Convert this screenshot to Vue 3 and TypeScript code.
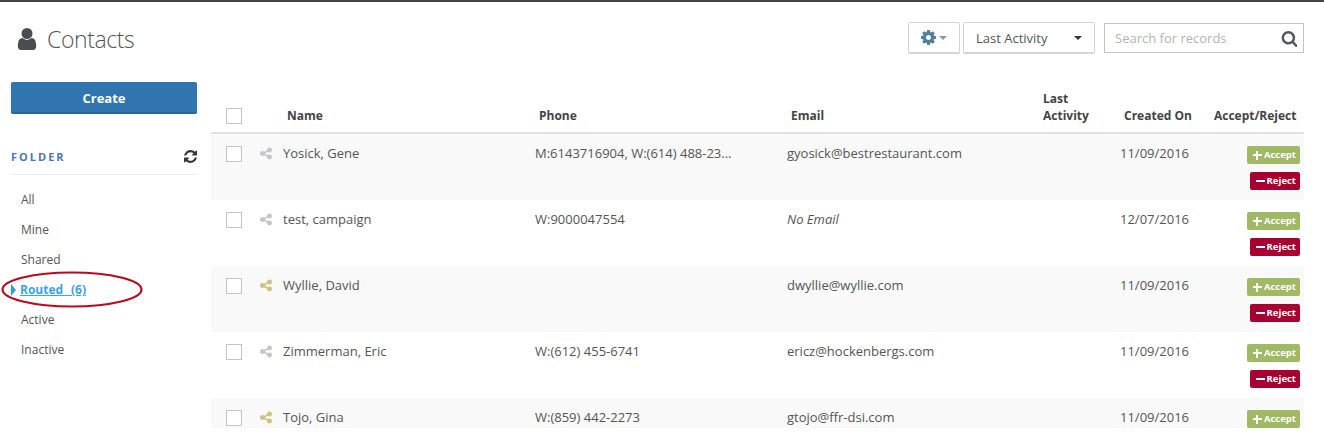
<script setup lang="ts">
interface Row { name: string; phone: string; email: string; created: string; routed: boolean; noEmail?: boolean }
const folders = ['All', 'Mine', 'Shared', 'Routed', 'Active', 'Inactive']
const rows: Row[] = [
  { name: 'Yosick, Gene', phone: 'M:6143716904, W:(614) 488-23...', email: 'gyosick@bestrestaurant.com', created: '11/09/2016', routed: false },
  { name: 'test, campaign', phone: 'W:9000047554', email: 'No Email', created: '12/07/2016', routed: false, noEmail: true },
  { name: 'Wyllie, David', phone: '', email: 'dwyllie@wyllie.com', created: '11/09/2016', routed: true },
  { name: 'Zimmerman, Eric', phone: 'W:(612) 455-6741', email: 'ericz@hockenbergs.com', created: '11/09/2016', routed: false },
  { name: 'Tojo, Gina', phone: 'W:(859) 442-2273', email: 'gtojo@ffr-dsi.com', created: '11/09/2016', routed: true },
]
const shareD = 'M1216 1024q133 0 226.5 93.5t93.5 226.5-93.5 226.5-226.5 93.5-226.5-93.5-93.5-226.5q0-12 2-34l-360-180q-92 86-218 86-133 0-226.5-93.5t-93.5-226.5 93.5-226.5 226.5-93.5q126 0 218 86l360-180q-2-22-2-34 0-133 93.5-226.5t226.5-93.5 226.5 93.5 93.5 226.5-93.5 226.5-226.5 93.5q-126 0-218-86l-360 180q2 22 2 34t-2 34l360 180q92-86 218-86z'
</script>

<template>
  <div class="page">
    <header class="top">
      <div class="title">
        <svg class="user" viewBox="256 128 1280 1536"><path fill="#4a4c50" d="M1536 1399q0 109-62.500 187t-150.500 78h-854q-88 0-150.500-78t-62.500-187q0-85 8.500-160.500t31.500-152 58.500-131 94-89 134.500-34.500q131 128 313 128t313-128q76 0 134.500 34.500t94 89 58.500 131 31.500 152 8.500 160.500zm-256-887q0 159-112.500 271.500t-271.500 112.500-271.500-112.500-112.500-271.500 112.500-271.500 271.500-112.500 271.500 112.500 112.500 271.500z"/></svg>
        <h1>Contacts</h1>
      </div>
      <div class="tools">
        <button class="btn gear" type="button">
          <svg class="cog" viewBox="0 128 1536 1536"><path fill="#4f7f9e" d="M1024 896q0-106-75-181t-181-75-181 75-75 181 75 181 181 75 181-75 75-181zm512-109v222q0 12-8 23t-20 13l-185 28q-19 54-39 91 35 50 107 138 10 12 10 25t-9 23q-27 37-99 108t-94 71q-12 0-26-9l-138-108q-44 23-91 38-16 136-29 186-7 28-36 28h-222q-14 0-24.500-8.500t-11.500-21.500l-28-184q-49-16-90-37l-141 107q-10 9-25 9-14 0-25-11-126-114-165-168-7-10-7-23 0-12 8-23 15-21 51-66.500t54-70.500q-27-50-41-99l-183-27q-13-2-21-12.500t-8-23.500v-222q0-12 8-23t19-13l186-28q14-46 39-92-40-57-107-138-10-12-10-24 0-10 9-23 26-36 98.500-107.500t94.500-71.500q13 0 26 10l138 107q44-23 91-38 16-136 29-186 7-28 36-28h222q14 0 24.500 8.500t11.500 21.500l28 184q49 16 90 37l142-107q9-9 24-9 13 0 25 10 129 119 165 170 7 8 7 22 0 12-8 23-15 21-51 66.500t-54 70.500q26 50 41 98l183 28q13 2 21 12.500t8 23.500z"/></svg>
          <i class="caret blue"></i>
        </button>
        <button class="btn sort" type="button">
          <span>Last Activity</span>
          <i class="caret"></i>
        </button>
        <div class="search">
          <span>Search for records</span>
          <svg class="mag" viewBox="0 128 1664 1664"><path fill="#55585c" d="M1216 832q0-185-131.500-316.500t-316.500-131.500-316.500 131.500-131.500 316.500 131.500 316.500 316.500 131.500 316.500-131.500 131.500-316.500zm512 832q0 52-38 90t-90 38q-54 0-90-38l-343-342q-179 124-399 124-143 0-273.500-55.500t-225-150-150-225-55.500-273.500 55.500-273.500 150-225 225-150 273.500-55.500 273.500 55.500 225 150 150 225 55.500 273.500q0 220-124 399l343 343q37 37 37 90z"/></svg>
        </div>
      </div>
    </header>

    <div class="content">
      <aside class="side">
        <button class="create" type="button">Create</button>
        <div class="folder-head">
          <span>FOLDER</span>
          <svg class="refresh" viewBox="128 128 1536 1536"><path fill="#33363a" d="M1639 1056q0 5-1 7-64 268-268 434.500t-478 166.500q-146 0-282.500-55t-243.500-157l-129 129q-19 19-45 19t-45-19-19-45v-448q0-26 19-45t45-19h448q26 0 45 19t19 45-19 45l-137 137q71 66 161 102t187 36q134 0 250-65t186-179q11-17 53-117 8-23 30-23h192q13 0 22.500 9.500t9.500 22.500zm25-800v448q0 26-19 45t-45 19h-448q-26 0-45-19t-19-45 19-45l138-138q-148-137-349-137-134 0-250 65t-186 179q-11 17-53 117-8 23-30 23h-199q-13 0-22.500-9.500t-9.500-22.500v-7q65-268 270-434.500t480-166.500q146 0 284 55.500t245 156.500l130-129q19-19 45-19t45 19 19 45z"/></svg>
        </div>
        <ul class="folders">
          <li v-for="f in folders" :key="f" :class="{ active: f === 'Routed' }">
            <template v-if="f === 'Routed'">
              <i class="arrow"></i><a>Routed&nbsp;&nbsp; (6)</a>
              <svg class="ring" viewBox="0 0 142 37"><ellipse cx="71" cy="18.500" rx="69.500" ry="17" fill="none" stroke="#b80a1c" stroke-width="2.200"/></svg>
            </template>
            <template v-else>{{ f }}</template>
          </li>
        </ul>
      </aside>

      <main class="table">
        <div class="row head">
          <div class="chk-cell"><span class="chk"></span></div>
          <div></div>
          <div class="h-pad">Name</div>
          <div class="h-pad">Phone</div>
          <div class="h-pad">Email</div>
          <div class="h-la">Last<br>Activity</div>
          <div class="h-pad">Created On</div>
          <div class="h-ar">Accept/Reject</div>
        </div>
        <div v-for="(r, i) in rows" :key="r.name" class="row body">
          <div class="chk-cell"><span class="chk"></span></div>
          <div><svg class="share" viewBox="0 128 1536 1536"><path :fill="r.routed ? '#cfc17f' : '#c3c5c9'" :d="shareD"/></svg></div>
          <div>{{ r.name }}</div>
          <div>{{ r.phone }}</div>
          <div :class="{ em: r.noEmail }">{{ r.email }}</div>
          <div></div>
          <div>{{ r.created }}</div>
          <div class="acts">
            <span class="act ok"><b class="plus"></b>Accept</span>
            <span v-if="i < 4" class="act no"><b class="minus"></b>Reject</span>
          </div>
        </div>
      </main>
    </div>
  </div>
</template>

<style>
html, body { margin: 0; background: #fff; }
</style>

<style scoped>
.page {
  width: 1324px; height: 444px; overflow: hidden; box-sizing: border-box;
  border-top: 2px solid #444;
  font-family: "Open Sans", sans-serif; font-size: 13px; color: #555; background: #fff;
}
.top { display: flex; justify-content: space-between; padding: 20px 20px 0 17px; height: 60px; box-sizing: border-box; }
.title { display: flex; align-items: center; height: 34px; }
.user { width: 20px; height: 22px; margin-right: 10px; }
h1 { margin: 0; font-family: "Open Sans Light", "Open Sans", sans-serif; font-size: 23px; font-weight: 300; color: #555; letter-spacing: -0.4px; }
.tools { display: flex; align-items: flex-start; }
.btn {
  display: flex; align-items: center; height: 32px; box-sizing: border-box; background: #fff;
  border: 1px solid #d5d5d5; border-bottom-width: 2px; border-radius: 2px; padding: 0;
  font: 13px "Open Sans", sans-serif; color: #555;
}
.gear { width: 52px; justify-content: center; margin-right: 3px; }
.cog { width: 15px; height: 15px; margin-right: 3px; }
.sort { width: 132px; justify-content: space-between; padding: 0 12px; margin-right: 9px; }
.caret { width: 0; height: 0; border: 4px solid transparent; border-top-color: #333; border-bottom: 0; }
.caret.blue { border-top-color: #7d9db3; }
.search {
  display: flex; align-items: center; justify-content: space-between; width: 200px; height: 30px;
  box-sizing: border-box; border: 1px solid #c4c4c4; padding: 0 6px 0 10px; color: #b4b4b4; margin-top: 1px;
}
.mag { width: 16px; height: 16px; margin-top: 1px; }

.content { display: flex; padding-left: 11px; }
.side { width: 186px; margin-right: 14px; flex: none; }
.create {
  display: block; width: 186px; height: 32px; border: 0; border-bottom: 2px solid #2a6496; border-radius: 2px;
  background: #3175b0; color: #fff; font: 700 13px "Open Sans", sans-serif; padding: 2px 0 0; margin-top: 20px;
}
.folder-head {
  display: flex; justify-content: space-between; align-items: center; height: 34px; margin-top: 27px;
  padding-bottom: 2px; border-bottom: 1px solid #eee; box-sizing: border-box;
  color: #4a78ab; font-size: 11px; font-weight: 700; letter-spacing: 2px;
}
.refresh { width: 13px; height: 13px; }
.folders { list-style: none; margin: 10px 0 0; padding: 0; }
.folders li { position: relative; height: 30px; line-height: 30px; padding-left: 10px; font-size: 12px; }
.folders li.active { padding-left: 9px; font-weight: 700; color: #3ca3e6; word-spacing: -0.5px; }
.folders a { text-decoration: underline; }
.arrow {
  position: absolute; left: 0; top: 9px; width: 0; height: 0;
  border-left: 5px solid #2f9ddb; border-top: 6px solid transparent; border-bottom: 6px solid transparent;
}
.ring { position: absolute; left: -10px; top: -4px; width: 142px; height: 37px; }

.table { width: 1093px; height: 366px; overflow: hidden; flex: none; }
.row { display: grid; grid-template-columns: 48px 24px 252px 252px 252px 81px 80px 104px; }
.head {
  height: 72px; box-sizing: border-box; border-bottom: 2px solid #e2e2e2; align-items: end;
  font-size: 12px; font-weight: 700; color: #444; padding-bottom: 8px; line-height: 17px;
}
.h-pad { padding-left: 4px; }
.h-la { padding-left: 4px; }
.h-ar { padding-left: 14px; white-space: nowrap; letter-spacing: -0.02px; }
.chk-cell { padding-left: 15px; }
.chk { display: block; width: 14px; height: 14px; border: 1px solid #c4c4c4; background: #fff; }
.body { height: 66px; box-sizing: border-box; padding-top: 10px; line-height: 18px; color: #555; }
.body:nth-child(even) { background: #f9f9f9; }
.body .chk { margin-top: 2px; }
.share { display: block; width: 12px; height: 13px; margin: 3px 0 0 1px; }
.em { font-style: italic; }
.acts { display: flex; flex-direction: column; align-items: flex-end; padding-right: 4px; gap: 8px; margin-top: 2px; }
.act {
  display: flex; align-items: center; height: 18px; border-radius: 2px; color: #fff;
  font-size: 9.500px; font-weight: 700; padding: 0 4px 0 6px; line-height: 18px;
}
.ok { background: #9fb964; }
.no { background: #a80030; }
.plus, .minus { position: relative; display: block; width: 9px; height: 9px; margin-right: 2px; }
.plus::before, .minus::before { content: ""; position: absolute; left: 0; top: 3px; width: 9px; height: 2px; background: #fff; }
.plus::after { content: ""; position: absolute; top: 0; width: 2px; height: 9px; background: #fff; left: 3.500px; }
</style>
